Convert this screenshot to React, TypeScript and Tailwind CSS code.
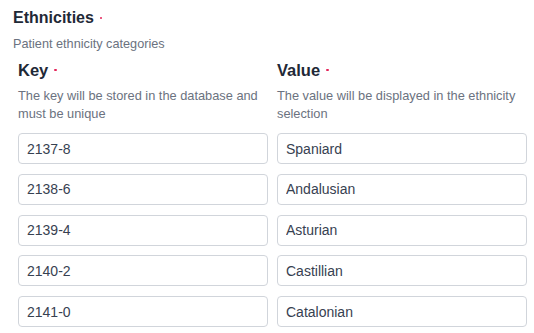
import React from "react";

const rows = [
  { key: "2137-8", value: "Spaniard" },
  { key: "2138-6", value: "Andalusian" },
  { key: "2139-4", value: "Asturian" },
  { key: "2140-2", value: "Castillian" },
  { key: "2141-0", value: "Catalonian" },
];

const Required = () => <span className="ml-[6px] h-[2.5px] w-[2.5px] rounded-full bg-[#e5245a]" />;

const Field = ({ text }: { text: string }) => (
  <input
    readOnly
    value={text}
    className="h-[31px] w-full rounded-[4px] border border-[#d1d5db] bg-white px-[8px] text-[14px] text-[#374151] outline-none"
  />
);

const App = () => {
  return (
    <div className="w-[534px] h-[333px] bg-white pl-[13px] pt-[6px] font-['Liberation_Sans',Arial,sans-serif] overflow-hidden">
      <h1 className="flex items-center text-[16px] font-bold leading-[24px] text-[#1f2937]">
        Ethnicities
        <Required />
      </h1>
      <p className="mt-[6px] text-[12.7px] leading-[16px] text-[#6b7280]">Patient ethnicity categories</p>
      <div className="mt-[6px] grid grid-cols-2 gap-x-[9px] pl-[5px] pr-[7px]">
        <div>
          <h2 className="flex items-center text-[16.5px] font-bold leading-[24px] text-[#1f2937]">
            Key
            <Required />
          </h2>
          <p className="mt-[5px] text-[12.8px] leading-[18px] text-[#6b7280]">
            The key will be stored in the database and must be unique
          </p>
        </div>
        <div>
          <h2 className="flex items-center text-[16.5px] font-bold leading-[24px] text-[#1f2937]">
            Value
            <Required />
          </h2>
          <p className="mt-[5px] text-[12.8px] leading-[18px] text-[#6b7280]">
            The value will be displayed in the ethnicity selection
          </p>
        </div>
      </div>
      <div className="mt-[10px] flex flex-col gap-[9.75px] pl-[5px] pr-[7px]">
        {rows.map((r) => (
          <div key={r.key} className="grid grid-cols-2 gap-x-[9px]">
            <Field text={r.key} />
            <Field text={r.value} />
          </div>
        ))}
      </div>
    </div>
  );
};

export default App;
